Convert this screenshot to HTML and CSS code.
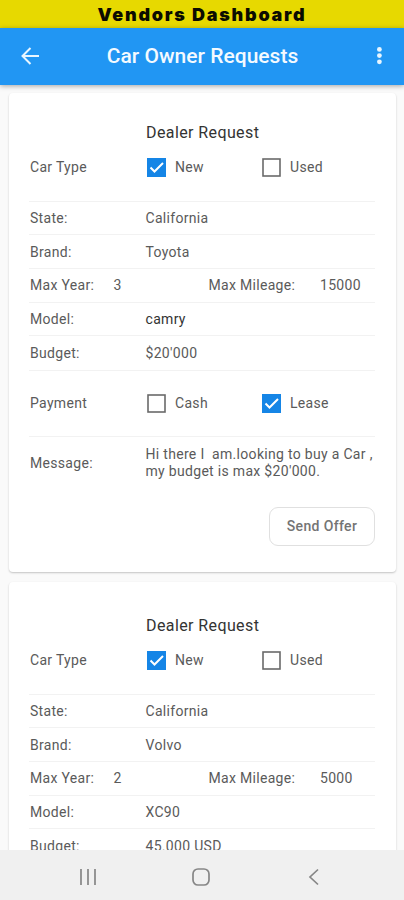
FILE: index.html
```html
<!DOCTYPE html>
<html lang="en">
<head>
<meta charset="utf-8">
<title>Car Owner Requests</title>
<link rel="stylesheet" href="styles.css">
</head>
<body>
<div class="banner"><span>Vendors Dashboard</span></div>
<header class="appbar">
  <svg class="back" width="20" height="20" viewBox="0 0 20 20"><path d="M19 10H3M10.5 2L2.5 10l8 8"/></svg>
  <h1>Car Owner Requests</h1>
  <svg class="more" width="6" height="20" viewBox="0 0 6 20"><circle cx="3.4" cy="3.4" r="2.4"/><circle cx="3.4" cy="9.6" r="2.4"/><circle cx="3.4" cy="15.8" r="2.4"/></svg>
</header>
<main class="list">
  <article class="card">
    <h2>Dealer Request</h2>
    <div class="row options first">
      <span class="label">Car Type</span>
      <span class="option"><svg class="box on" viewBox="0 0 19 19"><path d="M3.5 9.5l4 4 8.5-8.5"/></svg>New</span>
      <span class="option"><svg class="box" viewBox="0 0 19 19"><rect x="1" y="1" width="17" height="17"/></svg>Used</span>
    </div>
    <div class="row"><span class="label">State:</span><span>California</span></div>
    <div class="row"><span class="label">Brand:</span><span>Toyota</span></div>
    <div class="row quad"><span>Max Year:</span><span>3</span><span>Max Mileage:</span><span>15000</span></div>
    <div class="row"><span class="label">Model:</span><span class="dark">camry</span></div>
    <div class="row budget"><span class="label">Budget:</span><span>$20'000</span></div>
    <div class="row options payment">
      <span class="label">Payment</span>
      <span class="option"><svg class="box" viewBox="0 0 19 19"><rect x="1" y="1" width="17" height="17"/></svg>Cash</span>
      <span class="option"><svg class="box on" viewBox="0 0 19 19"><path d="M3.5 9.5l4 4 8.5-8.5"/></svg>Lease</span>
    </div>
    <div class="row message"><span class="label">Message:</span><p>Hi there I&nbsp; am.looking to buy a Car ,<br>my budget is max $20'000.</p></div>
    <button class="send">Send Offer</button>
  </article>
  <article class="card next">
    <h2>Dealer Request</h2>
    <div class="row options first">
      <span class="label">Car Type</span>
      <span class="option"><svg class="box on" viewBox="0 0 19 19"><path d="M3.5 9.5l4 4 8.5-8.5"/></svg>New</span>
      <span class="option"><svg class="box" viewBox="0 0 19 19"><rect x="1" y="1" width="17" height="17"/></svg>Used</span>
    </div>
    <div class="row"><span class="label">State:</span><span>California</span></div>
    <div class="row"><span class="label">Brand:</span><span>Volvo</span></div>
    <div class="row quad"><span>Max Year:</span><span>2</span><span>Max Mileage:</span><span>5000</span></div>
    <div class="row"><span class="label">Model:</span><span>XC90</span></div>
    <div class="row budget"><span class="label">Budget:</span><span>45.000 USD</span></div>
  </article>
</main>
<nav class="navbar">
  <svg width="18" height="18" viewBox="0 0 18 18"><path d="M2 1v16M9 1v16M16 1v16"/></svg>
  <svg width="18" height="18" viewBox="0 0 18 18"><rect x="1" y="1" width="16" height="16" rx="5"/></svg>
  <svg width="18" height="18" viewBox="0 0 18 18"><path d="M13 1.5L5 9l8 7.5"/></svg>
</nav>
</body>
</html>
```
FILE: styles.css
```css
* { box-sizing: border-box; }
body {
  margin: 0;
  height: 900px;
  display: flex;
  flex-direction: column;
  overflow: hidden;
  background: #fafafa;
  color: #5a5a5a;
  font: 14px/17px Roboto, sans-serif;
  letter-spacing: 0.31px;
}
.banner {
  flex: none;
  height: 28px;
  background: #e7d900;
  color: #0c0c00;
  text-align: center;
  font: 900 18px/29px Inter, sans-serif;
  letter-spacing: 1.75px;
}
.appbar {
  flex: none;
  position: relative;
  z-index: 1;
  height: 57px;
  display: flex;
  align-items: center;
  justify-content: space-between;
  padding: 0 22px 2px 20px;
  background: #2196f3;
  box-shadow: 0 1px 5px rgba(0, 0, 0, 0.35);
}
.appbar h1 {
  margin: 1px 11px 0 0;
  color: #f4faff;
  font-size: 21px;
  font-weight: 500;
  line-height: 28px;
  letter-spacing: 0.02px;
}
.back { fill: none; stroke: #e8f6ff; stroke-width: 2; }
.more { fill: #e8f6ff; }
.list {
  flex: 1;
  min-height: 0;
  overflow: hidden;
  padding: 8px 8px 0 9px;
}
.card {
  height: 479px;
  margin-bottom: 10px;
  padding: 30px 21px 0 20px;
  display: flex;
  flex-direction: column;
  border-radius: 4px;
  background: #fff;
  box-shadow: 0 1px 2px rgba(0, 0, 0, 0.22);
}
.card.next { padding-top: 34px; }
.card h2 {
  height: 19px;
  margin: 0 0 0 117px;
  color: #333;
  font-size: 16px;
  font-weight: 400;
  line-height: 20px;
  letter-spacing: 0.4px;
}
.row {
  flex: none;
  height: 33.7px;
  display: grid;
  grid-template-columns: 115.5px 1fr;
  align-items: center;
  padding: 1px 0 0 1px;
  border-bottom: 1px solid #f2f2f2;
}
.options { grid-template-columns: 117px 115px 1fr; }
.first { height: 59.5px; padding-bottom: 8px; }
.quad { grid-template-columns: 83.5px 95px 111.5px 1fr; }
.budget { height: 35px; padding-bottom: 1px; }
.payment { height: 66px; padding-top: 0; }
.message { height: 52px; border: 0; padding-top: 0; }
.message p { margin: 0; white-space: nowrap; }
.dark { color: #333; }
.option { display: flex; align-items: center; gap: 9px; }
.box { width: 19px; height: 19px; fill: none; stroke: #6a6a6a; stroke-width: 1.6; }
.box.on { background: #1585e6; stroke: #fff; stroke-width: 2; }
.send {
  width: 106px;
  height: 39px;
  flex: none;
  margin: 18px 0 0;
  align-self: flex-end;
  padding: 0;
  border: 1px solid #e0e0e0;
  border-radius: 9px;
  background: #fff;
  color: #747474;
  font: 500 14px/17px Roboto, sans-serif;
  letter-spacing: 0.35px;
}
.navbar {
  flex: none;
  height: 50px;
  display: flex;
  align-items: center;
  justify-content: space-between;
  padding: 3px 81px 0 79px;
  background: #f0f0f0;
}
.navbar svg { fill: none; stroke: #868686; stroke-width: 1.7; }
```
